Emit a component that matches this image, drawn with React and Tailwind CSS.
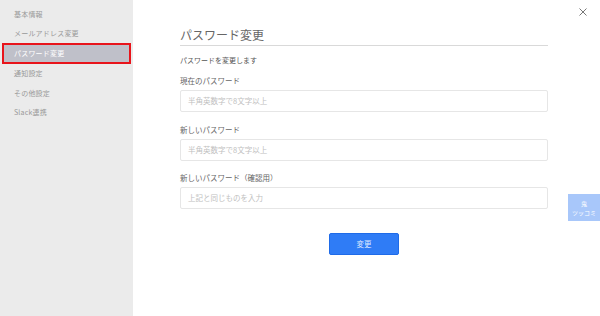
import React from "react";

const font = { fontFamily: '"Noto Sans CJK JP", "Noto Sans", sans-serif' };

function NavItem({ label, active }) {
  if (active) {
    return (
      <div className="mx-[2px] flex h-[21px] items-center border-2 border-[#e8141b] bg-[#bfc0c9] pl-[10px] text-[7px] leading-none tracking-[0.2px] text-white">
        {label}
      </div>
    );
  }
  return (
    <div className="flex h-[19.4px] items-center pl-[14px] text-[7px] leading-none tracking-[0.2px] text-[#999]">
      {label}
    </div>
  );
}

function Field({ label, placeholder, mt }) {
  return (
    <div className={mt}>
      <div className="h-[12px] text-[7.5px] leading-[12px] text-[#666]">{label}</div>
      <div className="mt-[3px] flex h-[22px] items-center rounded-[2px] border border-[#e6e6e6] bg-white pl-[7px] text-[7.5px] leading-none text-[#c0c0c0]">
        {placeholder}
      </div>
    </div>
  );
}

export default function App() {
  return (
    <div className="relative flex h-[316px] w-[600px] overflow-hidden bg-white" style={font}>
      <div className="flex w-[133px] flex-col bg-[#ebebeb] pt-[4.5px]">
        <NavItem label="基本情報" />
        <NavItem label="メールアドレス変更" />
        <NavItem label="パスワード変更" active />
        <NavItem label="通知設定" />
        <NavItem label="その他設定" />
        <NavItem label="Slack連携" />
      </div>
      <div className="relative flex-1">
        <div className="ml-[47px] flex w-[368px] flex-col pt-[26px]">
          <div className="h-[18px] text-[12px] leading-[18px] text-[#666]">パスワード変更</div>
          <div className="mt-[1px] h-px bg-[#d9d9d9]" />
          <div className="mt-[8px] h-[12px] text-[7px] leading-[12px] text-[#555]">パスワードを変更します</div>
          <Field label="現在のパスワード" placeholder="半角英数字で8文字以上" mt="mt-[9px]" />
          <Field label="新しいパスワード" placeholder="半角英数字で8文字以上" mt="mt-[12px]" />
          <Field label="新しいパスワード（確認用）" placeholder="上記と同じものを入力" mt="mt-[11px]" />
          <div className="mt-[24px] flex justify-center">
            <div className="flex h-[22px] w-[70px] items-center justify-center rounded-[2px] border border-[#1f6be8] bg-[#2f7cf6] text-[7.5px] leading-none text-[#dfe9ff]">
              変更
            </div>
          </div>
        </div>
        <svg className="absolute left-[446px] top-[8px]" width="8" height="8" viewBox="0 0 8 8">
          <path d="M0.5 0.5L7.5 7.5M7.5 0.5L0.5 7.5" stroke="#777" strokeWidth="1" />
        </svg>
      </div>
      <div className="absolute left-[568px] top-[194px] flex h-[27px] w-[32px] flex-col items-center justify-center bg-[#a8c7fa] text-[6px] leading-[9px] text-white">
        <span>鬼</span>
        <span>ツッコミ</span>
      </div>
    </div>
  );
}
